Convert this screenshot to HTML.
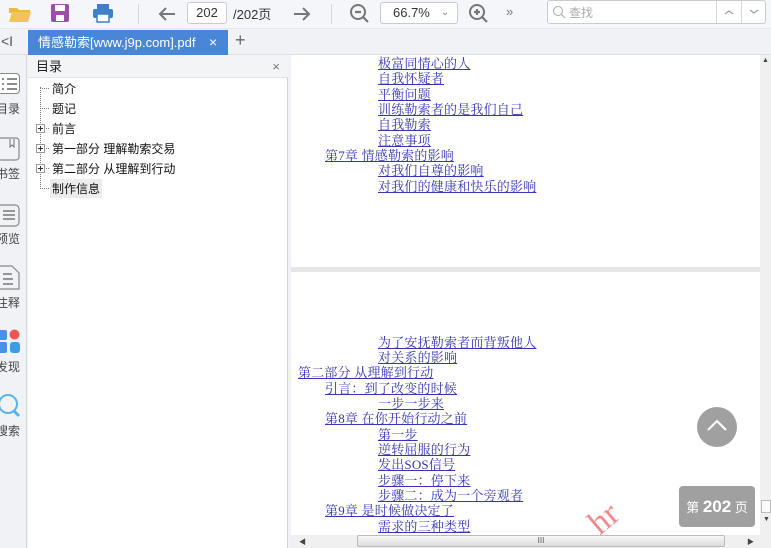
<!DOCTYPE html>
<html><head><meta charset="utf-8"><style>
*{margin:0;padding:0;box-sizing:border-box}
body{width:771px;height:548px;overflow:hidden;background:#f0f2f5;font-family:"Liberation Sans","Noto Sans CJK SC",sans-serif;position:relative}
.abs{position:absolute}
.tb{left:0;top:0;width:771px;height:29px;background:#f4f6f9;border-bottom:1px solid #e3e6ea}
.inp{border:1px solid #c8ccd2;border-radius:3px;background:#fff;font-size:13px;color:#333}
.tabbar{left:0;top:29px;width:771px;height:26px;background:#f0f2f5;border-bottom:1px solid #dde0e4}
.tab{left:28px;top:30px;width:200px;height:25px;background:#4a86d8;color:#fff;font-size:13px;line-height:25px;padding-left:10px}
.rail{left:0;top:55px;width:27px;height:493px;background:#f0f2f5;border-right:1px solid #d6d9dd}
.rl{font-size:12px;color:#444;left:-4px;width:30px}
.panel{left:28px;top:55px;width:260px;height:493px;background:#fff;border-right:1px solid #d0d3d7}
.ph{left:0;top:0;width:260px;height:23px;background:#f3f4f6;border-bottom:1px solid #e2e4e7;font-size:13px;line-height:23px;padding-left:8px;color:#222}
.ti{font-size:12px;color:#111;left:24px}
.plus{width:9px;height:9px;border:1px solid #999;left:8px;background:#fff}
.plus:before{content:"";position:absolute;left:1px;top:3px;width:5px;height:1px;background:#333}
.plus:after{content:"";position:absolute;left:3px;top:1px;width:1px;height:5px;background:#333}
.doc{left:291px;top:55px;width:469px;height:480px;background:#fff}
.l{position:absolute;font-family:"Liberation Serif","Noto Serif CJK SC",serif;font-size:13px;color:#3535b5;text-decoration:underline;white-space:nowrap;line-height:15px;letter-spacing:0.2px}
</style></head><body>
<div class="abs tb"></div>
<svg class="abs" style="left:8px;top:4px" width="24" height="20"><path d="M1 4h8l2 2h11v3H1z" fill="#e8b84a"/><path d="M1 18L4 8h19l-3 10z" fill="#f2c35a"/></svg>
<svg class="abs" style="left:50px;top:3px" width="20" height="20"><rect x="1" y="1" width="18" height="18" rx="2" fill="#9b4fa8"/><rect x="5" y="2" width="10" height="6" fill="#fff"/><rect x="6" y="12" width="8" height="6" fill="#fff"/></svg>
<svg class="abs" style="left:92px;top:3px" width="22" height="20"><rect x="5" y="1" width="12" height="5" fill="#3f7fc4"/><rect x="1" y="6" width="20" height="9" rx="2" fill="#3f7fc4"/><rect x="5" y="11" width="12" height="8" fill="#fff" stroke="#3f7fc4" stroke-width="1.5"/></svg>
<div class="abs" style="left:138px;top:4px;width:1px;height:20px;background:#d5d8dc"></div>
<svg class="abs" style="left:157px;top:5px" width="20" height="18"><path d="M18 9H3M9 3L3 9l6 6" fill="none" stroke="#777" stroke-width="2"/></svg>
<div class="abs inp" style="left:187px;top:2px;width:40px;height:22px;text-align:center;line-height:20px">202</div>
<div class="abs" style="left:233px;top:4px;font-size:13px;color:#333">/202页</div>
<svg class="abs" style="left:292px;top:5px" width="20" height="18"><path d="M2 9h15M11 3l6 6-6 6" fill="none" stroke="#777" stroke-width="2"/></svg>
<div class="abs" style="left:331px;top:4px;width:1px;height:20px;background:#d5d8dc"></div>
<svg class="abs" style="left:349px;top:3px" width="22" height="22"><circle cx="9" cy="9" r="7" fill="none" stroke="#777" stroke-width="2"/><path d="M6 9h6M14 14l5 5" stroke="#777" stroke-width="2.2"/></svg>
<div class="abs inp" style="left:380px;top:2px;width:78px;height:22px;line-height:20px;padding-left:12px">66.7%<span style="position:absolute;left:60px;color:#888;font-size:10px">&#8964;</span></div>
<svg class="abs" style="left:468px;top:3px" width="22" height="22"><circle cx="9" cy="9" r="7" fill="none" stroke="#777" stroke-width="2"/><path d="M6 9h6M9 6v6M14 14l5 5" stroke="#777" stroke-width="2.2"/></svg>
<div class="abs" style="left:506px;top:4px;font-size:13px;color:#777">»</div>
<div class="abs inp" style="left:547px;top:0px;width:219px;height:24px"></div>
<svg class="abs" style="left:552px;top:5px" width="14" height="14"><circle cx="6" cy="6" r="4.5" fill="none" stroke="#aaa"/><path d="M9 9l4 4" stroke="#aaa"/></svg>
<div class="abs" style="left:569px;top:4px;font-size:12px;color:#aaa">查找</div>
<div class="abs" style="left:716px;top:1px;width:1px;height:22px;background:#d5d8dc"></div>
<div class="abs" style="left:741px;top:1px;width:1px;height:22px;background:#d5d8dc"></div>
<svg class="abs" style="left:724px;top:9px" width="10" height="6"><path d="M1 5l4-3 4 3" fill="none" stroke="#888"/></svg>
<svg class="abs" style="left:749px;top:9px" width="10" height="6"><path d="M1 1l4 3 4-3" fill="none" stroke="#888"/></svg>

<div class="abs tabbar"></div>
<div class="abs" style="left:1px;top:33px;font-size:14px;color:#555">&lt;I</div>
<div class="abs tab">情感勒索[www.j9p.com].pdf<span style="position:absolute;left:181px;font-size:14px">×</span></div>
<div class="abs" style="left:235px;top:30px;font-size:18px;color:#666">+</div>

<div class="abs rail"></div>
<div class="abs" style="left:-3px;top:73px;width:23px;height:21px;border:1px solid #888;border-radius:4px;background:#fff"></div>
<svg class="abs" style="left:0;top:76px" width="20" height="16"><path d="M2 3h2M7 3h10M2 8h2M7 8h10M2 13h2M7 13h10" stroke="#666" stroke-width="1.6"/></svg>
<div class="abs rl" style="top:100px">目录</div>
<svg class="abs" style="left:0;top:137px" width="20" height="24"><rect x="-2" y="1" width="21" height="22" rx="3" fill="none" stroke="#888" stroke-width="1.2"/><path d="M10 2v8l2-2 2 2V2" fill="none" stroke="#777"/></svg>
<div class="abs rl" style="top:165px">书签</div>
<svg class="abs" style="left:0;top:202px" width="20" height="26"><rect x="-3" y="3" width="22" height="21" rx="4" fill="none" stroke="#888" stroke-width="1.2"/><path d="M3 9h12M3 13h12M3 17h12" stroke="#777" stroke-width="1.5"/></svg>
<div class="abs rl" style="top:230px">预览</div>
<svg class="abs" style="left:0;top:264px" width="20" height="26"><path d="M-2 2h14l7 7v16H-2z" fill="none" stroke="#888" stroke-width="1.2"/><path d="M3 10h9M3 15h10M3 20h10" stroke="#777" stroke-width="1.4"/></svg>
<div class="abs rl" style="top:294px">注释</div>
<svg class="abs" style="left:0;top:329px" width="20" height="25"><rect x="-3" y="1" width="10" height="10" rx="2" fill="#4a90e8"/><circle cx="14.5" cy="5.5" r="5" fill="#f05555"/><rect x="-3" y="13" width="10" height="11" rx="2" fill="#4a90e8"/><rect x="10" y="13" width="10" height="11" rx="3" fill="#3a9be8"/></svg>
<div class="abs rl" style="top:358px">发现</div>
<svg class="abs" style="left:0;top:393px" width="22" height="28"><circle cx="8" cy="11" r="9" fill="none" stroke="#5ab4e8" stroke-width="2"/><path d="M14 18l5 5" stroke="#5ab4e8" stroke-width="3"/></svg>
<div class="abs rl" style="top:422px">搜索</div>

<div class="abs panel">
 <div class="abs ph">目录<span style="position:absolute;right:8px;color:#777">×</span></div>
 <div class="abs" style="left:12px;top:32px;height:102px;border-left:1px dotted #777"></div>
 <div class="abs" style="left:12px;top:33px;width:9px;border-top:1px dotted #777"></div>
 <div class="abs" style="left:12px;top:53px;width:9px;border-top:1px dotted #777"></div>
 <div class="abs" style="left:12px;top:73px;width:9px;border-top:1px dotted #777"></div>
 <div class="abs" style="left:12px;top:93px;width:9px;border-top:1px dotted #777"></div>
 <div class="abs" style="left:12px;top:113px;width:9px;border-top:1px dotted #777"></div>
 <div class="abs" style="left:12px;top:133px;width:9px;border-top:1px dotted #777"></div>
 <div class="abs plus" style="top:69px"></div>
 <div class="abs plus" style="top:89px"></div>
 <div class="abs plus" style="top:109px"></div>
 <div class="abs ti" style="top:25px">简介</div>
 <div class="abs ti" style="top:45px">题记</div>
 <div class="abs ti" style="top:65px">前言</div>
 <div class="abs ti" style="top:85px">第一部分 理解勒索交易</div>
 <div class="abs ti" style="top:105px">第二部分 从理解到行动</div>
 <div class="abs ti" style="top:124px;background:#ececec;padding:1px 2px;left:22px">制作信息</div>
</div>

<div class="abs doc"></div>
<div class="abs" style="left:291px;top:267px;width:469px;height:5px;background:#e6e6e6"></div>
<div class="abs" style="left:760px;top:55px;width:11px;height:480px;background:#f0f0f0"></div>
<div class="abs" style="left:762px;top:57px;font-size:7px;color:#444">▲</div>
<div class="abs" style="left:761px;top:500px;width:10px;height:13px;background:#fafafa;border:1px solid #bbb"></div>
<div class="abs" style="left:763px;top:516px;font-size:7px;color:#444">▼</div>
<div class="abs" style="left:291px;top:535px;width:480px;height:13px;background:#f0f0f0"></div>
<div class="abs" style="left:357px;top:535px;width:368px;height:12px;background:linear-gradient(#f6f6f6,#dcdcdc);border:1px solid #bbb;border-radius:2px;font-size:8px;text-align:center;line-height:10px;color:#555">III</div>
<div class="abs" style="left:299px;top:537px;font-size:7px;color:#444">◀</div>
<div class="abs" style="left:747px;top:537px;font-size:7px;color:#444">▶</div>

<div class="l" style="left:378px;top:56px">极富同情心的人</div>
<div class="l" style="left:378px;top:71px">自我怀疑者</div>
<div class="l" style="left:378px;top:87px">平衡问题</div>
<div class="l" style="left:378px;top:102px">训练勒索者的是我们自己</div>
<div class="l" style="left:378px;top:117px">自我勒索</div>
<div class="l" style="left:378px;top:133px">注意事项</div>
<div class="l" style="left:325px;top:148px">第7章 情感勒索的影响</div>
<div class="l" style="left:378px;top:163px">对我们自尊的影响</div>
<div class="l" style="left:378px;top:179px">对我们的健康和快乐的影响</div>

<div class="l" style="left:378px;top:335px">为了安抚勒索者而背叛他人</div>
<div class="l" style="left:378px;top:350px">对关系的影响</div>
<div class="l" style="left:298px;top:365px">第二部分 从理解到行动</div>
<div class="l" style="left:325px;top:381px">引言：到了改变的时候</div>
<div class="l" style="left:378px;top:396px">一步一步来</div>
<div class="l" style="left:325px;top:411px">第8章 在你开始行动之前</div>
<div class="l" style="left:378px;top:427px">第一步</div>
<div class="l" style="left:378px;top:442px">逆转屈服的行为</div>
<div class="l" style="left:378px;top:457px">发出SOS信号</div>
<div class="l" style="left:378px;top:473px">步骤一：停下来</div>
<div class="l" style="left:378px;top:488px">步骤二：成为一个旁观者</div>
<div class="l" style="left:325px;top:503px">第9章 是时候做决定了</div>
<div class="l" style="left:378px;top:519px">需求的三种类型</div>

<div class="abs" style="left:590px;top:500px;font-family:'Liberation Serif',serif;font-size:34px;color:#f08a8a;transform:rotate(-40deg)">hr</div>

<div class="abs" style="left:697px;top:407px;width:40px;height:40px;border-radius:50%;background:#a0a0a0"></div>
<svg class="abs" style="left:705px;top:417px" width="24" height="16"><path d="M3 13l9-9 9 9" fill="none" stroke="#fff" stroke-width="2.2"/></svg>
<div class="abs" style="left:679px;top:486px;width:76px;height:41px;border-radius:4px;background:#a0a0a0;color:#fff;font-size:13px;line-height:41px;text-align:center">第 <b style="font-size:17px">202</b> 页</div>
</body></html>
